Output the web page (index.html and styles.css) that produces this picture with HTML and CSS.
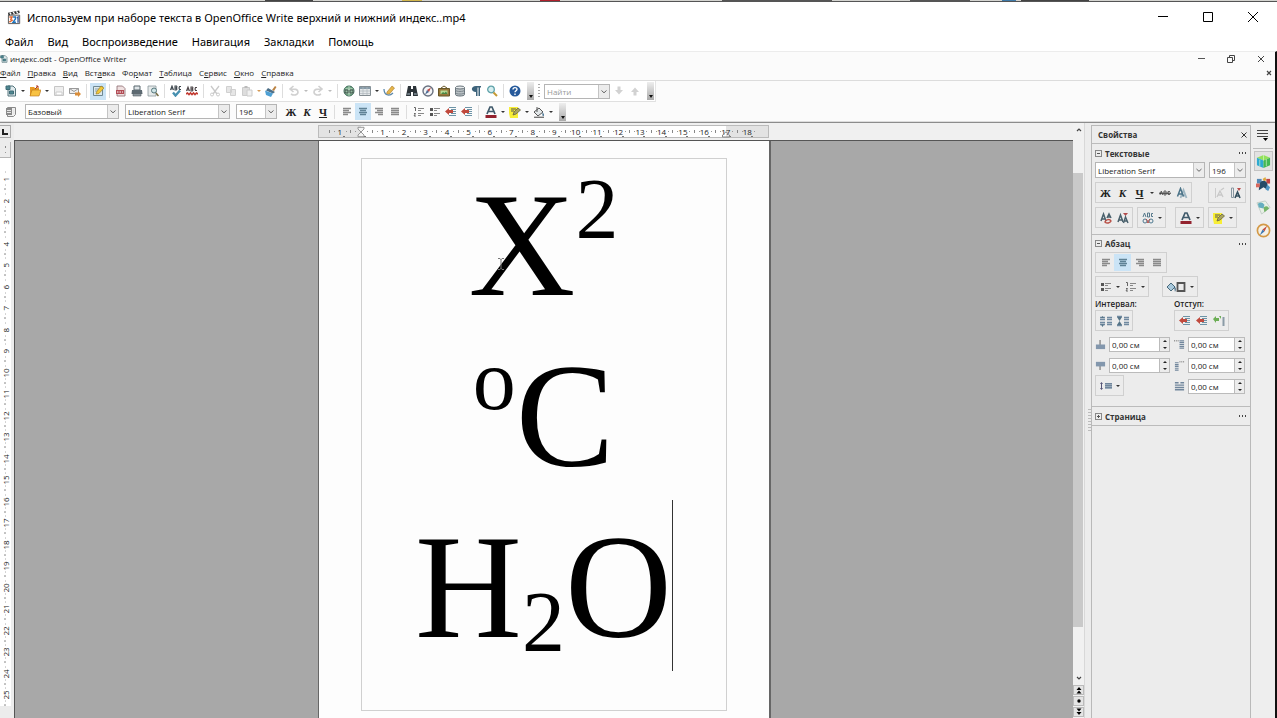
FILE: index.html
```html
<!DOCTYPE html>
<html lang="ru">
<head>
<meta charset="utf-8">
<title>Используем при наборе текста в OpenOffice Write верхний и нижний индекс..mp4</title>
<link rel="stylesheet" href="styles.css">
</head>
<body>
<svg class="defs" aria-hidden="true">
  <symbol id="chev" viewBox="0 0 8 8"><path d="M1.500 3 4 5.300 6.500 3" fill="none" stroke="#666" stroke-width="1"/></symbol>
  <symbol id="doc" viewBox="0 0 12 12"><path d="M3 1h5l2.500 2.500V11H3z" fill="#dfe9ec" stroke="#54757c"/><path d="M1 1h4v3.500H1zM4.500 6h4v3h-4z" fill="#4f8791" stroke="#3f6c76"/></symbol>
  <symbol id="open" viewBox="0 0 12 12"><path d="M1 2h4l1 1h4v8H1z" fill="#e79b25"/><path d="M1 11 3 5h9l-2 6z" fill="#f8c243" stroke="#b8731a" stroke-width=".6"/><path d="m6 4 3-3m0 0H7m2 0v2" stroke="#b13c21" fill="none"/></symbol>
  <symbol id="save" viewBox="0 0 12 12"><path d="M1.500 1.500h9v9h-9z" fill="#eee" stroke="#c6c6c6"/><path d="M3 7h6v3H3z" fill="#fff" stroke="#ccc"/></symbol>
  <symbol id="mail" viewBox="0 0 12 12"><path d="M.5 3.500h9v5h-9z" fill="#eee" stroke="#999"/><path d="m.5 3.500 4.500 3 4.500-3" fill="none" stroke="#999"/><path d="M6 7.500h3V6l3 3-3 3v-1.500H6z" fill="#d98d3a"/></symbol>
  <symbol id="edit" viewBox="0 0 12 12"><path d="M1.500 1.500h9v9h-9z" fill="#dce8ec" stroke="#6f8992"/><path d="M3 4h5M3 6h3" stroke="#8fa3aa"/><path d="m4 9 .5-2L9 1l3 2-5 5.500z" fill="#f1c83b" stroke="#99771a" stroke-width=".6"/></symbol>
  <symbol id="pdf" viewBox="0 0 12 12"><path d="M2 1h5.500L10 3.500V11H2z" fill="#efe0e0" stroke="#8c6a6f" stroke-width=".8"/><path d="M1 5h8v4H1z" fill="#b34c55"/><path d="M2 7h1.500M4.500 7H6M7 7h1" stroke="#fff"/></symbol>
  <symbol id="print" viewBox="0 0 12 12"><path d="M3 1h6v4H3z" fill="#dfe5e8" stroke="#59666d"/><path d="M1 5h10l.5 4H.5z" fill="#5d6a72"/><path d="M2 8.500h8V11H2z" fill="#8d989e" stroke="#525b61" stroke-width=".6"/></symbol>
  <symbol id="preview" viewBox="0 0 12 12"><path d="M1 1h8v10H1z" fill="#e6eaea" stroke="#8a989c" stroke-width=".8"/><circle cx="7" cy="5.500" r="2.500" fill="#cfe4e6" stroke="#56777c"/><path d="m9 8 2.500 3" stroke="#746b42" stroke-width="1.500"/></symbol>
  <symbol id="spell" viewBox="0 0 12 12"><path d="M.5 5 2 1l1.500 4M1 4h2M5 1h1.500L7 2l-1 1 1 1-.7 1H5zM11 1.500H9.500L9 3l.5 1.500H11" fill="none" stroke="#3c454c" stroke-width="1.100"/><path d="m3 7.500 2.500 3L10 5.500" fill="none" stroke="#4690b0" stroke-width="2.400"/></symbol>
  <symbol id="auto" viewBox="0 0 12 12"><path d="M.5 6 2 2l1.500 4M1 5h2M5 2h1.500L7 3 6 4l1 1-.7 1H5zM11 2.500H9.500L9 4l.5 1.500H11" fill="none" stroke="#4b4447" stroke-width="1.100"/><path d="m0 9 1.500-1L3 9.500 4.500 8 6 9.500 7.500 8 9 9.500 10.500 8 12 9" fill="none" stroke="#c33a31" stroke-width="1.600"/></symbol>
  <symbol id="cut" viewBox="0 0 12 12"><path d="m2 1 6 8M10 1 4 9" stroke="#c9c9c9" stroke-width="1.300"/><circle cx="3" cy="9.500" r="1.500" fill="none" stroke="#ccc"/><circle cx="9" cy="9.500" r="1.500" fill="none" stroke="#ccc"/></symbol>
  <symbol id="copy" viewBox="0 0 12 12"><path d="M1.500 1.500h5v6h-5zM5.500 4.500h5v6h-5z" fill="#e6e6e6" stroke="#d0d0d0"/></symbol>
  <symbol id="paste" viewBox="0 0 12 12"><path d="M1.500 2.500h7v8h-7z" fill="#ddd" stroke="#ccc"/><path d="M3.500 1h3v2h-3z" fill="#bbb"/><path d="M6 5h5v6H6z" fill="#f1f1f1" stroke="#ccc"/></symbol>
  <symbol id="brush" viewBox="0 0 12 12"><path d="m7 5 3-4 1.500 1L9 6z" fill="#bb8344"/><path d="m3 3 7 4-2 1.500L1 5.500z" fill="#4e6f87"/><path d="m0 5.500 8 3L6 12 1 10z" fill="#4ea0d4"/></symbol>
  <symbol id="undo" viewBox="0 0 12 12"><path d="M3 9c3 2 7 1 7-2S7 4 3 4m2.500-3L2 4l3.500 3" fill="none" stroke="#d0d0d0" stroke-width="1.600"/></symbol>
  <symbol id="redo" viewBox="0 0 12 12"><path d="M9 9c-3 2-7 1-7-2s3-3 7-3M6.500 1 10 4 6.500 7" fill="none" stroke="#d0d0d0" stroke-width="1.600"/></symbol>
  <symbol id="globe" viewBox="0 0 12 12"><circle cx="6" cy="6" r="5" fill="#72a884" stroke="#3d6a58"/><path d="M1 6h10M6 1v10M2.500 3.500q3.500 1.500 7 0M2.500 8.500q3.500-1.500 7 0" fill="none" stroke="#d0e6d4" stroke-width=".7"/><path d="M2 5h3v3H2zM7 5h3v3H7z" fill="none" stroke="#44534e"/></symbol>
  <symbol id="table" viewBox="0 0 12 12"><path d="M.5 1.500h11v9H.5z" fill="#e4e8ea" stroke="#848d92"/><path d="M.5 2h11v2H.5z" fill="#879ba8"/><path d="M4 2v8M8 2v8M1 6h10M1 8.500h10" stroke="#b0b8bd" stroke-width=".7"/></symbol>
  <symbol id="draw" viewBox="0 0 12 12"><path d="m4 7 5-6 2.500 2L6.500 9 3.500 9.500z" fill="#e6b64a" stroke="#a47629" stroke-width=".6"/><path d="M1 4c0 6 5 8 9 4" fill="none" stroke="#5d89ac" stroke-width="1.300"/></symbol>
  <symbol id="find" viewBox="0 0 12 12"><path d="M2 1h3v3h2V1h3l2 10H7V7H5v4H0z" fill="#2d3439"/><path d="M1.500 8H4v2H1zM8 8h2.500l.5 2H8z" fill="#6c7981"/></symbol>
  <symbol id="nav" viewBox="0 0 12 12"><circle cx="6" cy="6" r="5" fill="#f3f5f7" stroke="#6b7280" stroke-width="1.400"/><path d="m9 2.500-2 4.500-2-2z" fill="#c34742"/><path d="M3 9.500 5 5l2 2z" fill="#4a6a95"/></symbol>
  <symbol id="gallery" viewBox="0 0 12 12"><path d="m3 3 3-2 3 2" fill="none" stroke="#6b5a2c"/><path d="M.5 3.500h11v7.500H.5z" fill="#97783a" stroke="#665628"/><path d="M2.500 5.500h7V9h-7z" fill="#b9db95"/><path d="m3 9 2-2 1.500 1L8 6.500 9.500 9z" fill="#4b8745"/></symbol>
  <symbol id="db" viewBox="0 0 12 12"><path d="M1.500 2.500v7c0 2 9 2 9 0v-7" fill="#b9c0c4" stroke="#68737a"/><ellipse cx="6" cy="2.500" rx="4.500" ry="1.500" fill="#e6eaec" stroke="#68737a"/><path d="M1.500 5c0 2 9 2 9 0m-9 2.500c0 2 9 2 9 0" fill="none" stroke="#7f8a90"/></symbol>
  <symbol id="pilcrow" viewBox="0 0 12 12"><path d="M6 1h5v1.500h-1V11H8.500V2.500h-1V11H6V7C.5 7 .5 1 6 1z" fill="#3d637b"/></symbol>
  <symbol id="zoom" viewBox="0 0 12 12"><circle cx="5" cy="4.500" r="3.300" fill="#d6eef0" stroke="#5da1a8" stroke-width="1.300"/><path d="m7.500 7.500 3.500 3.500" stroke="#c69a35" stroke-width="2"/></symbol>
  <symbol id="help" viewBox="0 0 12 12"><circle cx="6" cy="6" r="5.500" fill="#265a9b"/><path d="M4 4.500C4 2 8 2 8 4.300c0 1.400-2 1.400-2 3M6 8.500V10" fill="none" stroke="#fff" stroke-width="1.400"/></symbol>
  <symbol id="down" viewBox="0 0 12 12"><path d="M4.500 1.500h3V5H10l-4 4.500L2 5h2.500z" fill="#d2d2d2"/></symbol>
  <symbol id="up" viewBox="0 0 12 12"><path d="M4.500 10.500h3V7H10L6 2.500 2 7h2.500z" fill="#d2d2d2"/></symbol>
  <symbol id="styles" viewBox="0 0 12 12"><path d="M2.500 1.500h8v7l-2 2h-6z" fill="#f0f0f0" stroke="#8a8a8a"/><path d="M1 2h6v7H1z" fill="#8a8a8a"/><path d="M2 4.500h4M2 6.500h4M8.500 3v5" stroke="#e6e6e6"/></symbol>
  <symbol id="left" viewBox="0 0 12 12"><path d="M2 2.500h8M2 4.500h6M2 6.500h8M2 8.500h5" stroke="#8a8a8a" stroke-width="1.300"/></symbol>
  <symbol id="center" viewBox="0 0 12 12"><path d="M2 2.500h8M3 4.500h6M2 6.500h8M3 8.500h6" stroke="#5f8296" stroke-width="1.300"/></symbol>
  <symbol id="right" viewBox="0 0 12 12"><path d="M2 2.500h8M4 4.500h6M2 6.500h8M5 8.500h5" stroke="#8a8a8a" stroke-width="1.300"/></symbol>
  <symbol id="just" viewBox="0 0 12 12"><path d="M2 2.500h8M2 4.500h8M2 6.500h8M2 8.500h8" stroke="#8a8a8a" stroke-width="1.300"/></symbol>
  <symbol id="num" viewBox="0 0 12 12"><path d="M1 1.500h1.500V5M1 7.500h1.500L1 10h2" fill="none" stroke="#666"/><path d="M5 2.500h6M5 4.500h3M5 7.500h6M5 9.500h3" stroke="#888"/></symbol>
  <symbol id="bul" viewBox="0 0 12 12"><path d="M1 2h3v3H1zM1 7h3v3H1z" fill="#555"/><path d="M5 2.500h6M5 4.500h3M5 7.500h6M5 9.500h3" stroke="#888"/></symbol>
  <symbol id="ind" viewBox="0 0 12 12"><path d="M4 1.500h7M6 3.500h5M7 5.500h4M6 7.500h5M4 9.500h7" stroke="#6d93a6" stroke-width="1.200"/><path d="M0 5.500 4 2v2h4v3H4v2z" fill="#c0493d"/></symbol>
  <symbol id="fcol" viewBox="0 0 12 12"><path d="M2 8 5 1h2l3 7M3.500 5.500h5" fill="none" stroke="#405a6b" stroke-width="1.700"/><path d="M.5 9h11v3H.5z" fill="#93222e"/></symbol>
  <symbol id="mark" viewBox="0 0 12 12"><path d="M0 1h9v11H1L0 7z" fill="#f8ee36"/><path d="M2 3h5M2 5h3" stroke="#555"/><path d="m4 9 1-3 4-4 2.500 2L7 8z" fill="#aaa45f" stroke="#67653d" stroke-width=".8"/></symbol>
  <symbol id="fill" viewBox="0 0 12 12"><path d="m1 6 5-4 4 4-5 4z" fill="#e3e8ea" stroke="#555"/><path d="M4 1v5" stroke="#555"/><path d="M9.500 6q2.500 3 1 4t-1-4z" fill="#4c7694"/><path d="M1 11.300h10" stroke="#777" stroke-width="1.400"/></symbol>
  <symbol id="strike" viewBox="0 0 12 12"><path d="M1 8 2.300 4 3.600 8M5 4h2v4H5zM11 4.500H9v3h2" fill="none" stroke="#555" stroke-width=".9"/><path d="M0 6.200h12" stroke="#333"/></symbol>
  <symbol id="shadow" viewBox="0 0 12 12"><path d="M4.500 11 7.500 3l3 8M6 8.500h4" fill="none" stroke="#9fb6c2" stroke-width="1.800"/><path d="m1.500 9.500 3-8 3 8M3 7h4" fill="none" stroke="#4b7388" stroke-width="1.500"/></symbol>
  <symbol id="spacing" viewBox="0 0 12 12"><path d="M1.500 1h2v9.500h-2z" fill="none" stroke="#8796a0"/><path d="m5 11 2.500-6L10 11M6 9h4" fill="none" stroke="#34505f" stroke-width="1.600"/><path d="M7 1h4L9 4z" fill="#b94a48"/></symbol>
  <symbol id="spacoff" viewBox="0 0 12 12"><path d="M2.500 1v10" stroke="#ccc"/><path d="m4 10 3-6 3 6M5 8h4M8 3l3-2" fill="none" stroke="#c8c8c8" stroke-width="1.300"/></symbol>
  <symbol id="sup" viewBox="0 0 12 12"><path d="m1 10 2.500-7L6 10M2 8h4" fill="none" stroke="#49606c" stroke-width="1.500"/><path d="M6 1h5L8.500 4z" fill="#b34b4b"/><path d="m6.500 11 2-6 2.500 6M7.500 9h3" fill="none" stroke="#49606c" stroke-width="1.400"/></symbol>
  <symbol id="sub" viewBox="0 0 12 12"><path d="m1 9 2.500-7L6 9M2 7h3M7 6l2-4 2 4M8 5h3" fill="none" stroke="#49606c" stroke-width="1.500"/><path d="M5 10c1-3 5-3 6-1-1 2-4 3-6 1z" fill="none" stroke="#b95148" stroke-width="1.500"/></symbol>
  <symbol id="chars" viewBox="0 0 12 12"><path d="m1 5 1.500-4L4 5M5.500 1v4h2V1zM11 1.500H9.500v3H11" fill="none" stroke="#56798b"/><circle cx="3" cy="9" r="2" fill="none" stroke="#4e7a91"/><circle cx="9" cy="9" r="2" fill="none" stroke="#4e7a91"/><path d="m4 7 3 4M8 7l-3 4" stroke="#b1504b"/></symbol>
  <symbol id="bucket" viewBox="0 0 20 12"><path d="m1 6 4-4 4 4-4 4z" fill="#a9c9dc" stroke="#496a7c"/><path d="M8 5q3 2 1 6z" fill="#35607c"/><path d="M11.500 2h7v8h-7z" fill="none" stroke="#555" stroke-width="1.800"/></symbol>
  <symbol id="spin1" viewBox="0 0 12 12"><path d="M0 2.500h5M0 4.500h5M0 7.500h5M0 9.500h5M7 2.500h5M7 4.500h5M7 7.500h5M7 9.500h5" stroke="#7089a0" stroke-width="1.400"/><path d="m1 3 1.500-2L4 3zM1 9.500 2.500 12 4 9.500z" fill="#557487"/></symbol>
  <symbol id="spin2" viewBox="0 0 12 12"><path d="M0 1.500h5M0 10.500h5M7 2.500h5M7 4.500h5M7 7.500h5M7 9.500h5" stroke="#7089a0" stroke-width="1.400"/><path d="m0 2 2.500 4L5 2zM0 10l2.500-4L5 10z" fill="#557487"/></symbol>
  <symbol id="hang" viewBox="0 0 12 12"><path d="m0 4 3-3v2h3v3H3v2zM6 1h2v3" fill="#6cae55"/><path d="M10.500 2v9" stroke="#8a9ba6" stroke-width="2"/></symbol>
  <symbol id="above" viewBox="0 0 12 12"><path d="M5.500 1v6" stroke="#777" stroke-width="1.300"/><path d="M1 6h10v5H1z" fill="#8397ad"/></symbol>
  <symbol id="below" viewBox="0 0 12 12"><path d="M5.500 6v5" stroke="#777" stroke-width="1.300"/><path d="M1 2h10v5H1z" fill="#8397ad"/></symbol>
  <symbol id="before" viewBox="0 0 12 12"><path d="M0 2h5" stroke="#555" stroke-dasharray="1 1"/><path d="M6 2h5M6 4h5M6 6h5M6 8h5M6 10h5" stroke="#71869c" stroke-width="1.300"/></symbol>
  <symbol id="after" viewBox="0 0 12 12"><path d="M6 2h5" stroke="#555" stroke-dasharray="1 1"/><path d="M1 3h4M1 5h4M1 7h4M1 9h4M1 11h4" stroke="#71869c" stroke-width="1.300"/></symbol>
  <symbol id="first" viewBox="0 0 12 12"><path d="M1 2h4M7 2h4M1 4.500h10M1 7h10M1 9.500h10" stroke="#71869c" stroke-width="1.600"/></symbol>
  <symbol id="lines" viewBox="0 0 12 12"><path d="m0 4 1.500-2L3 4zM0 8l1.500 2L3 8zM1 4h1v4H1z" fill="#557"/><path d="M5 3h7v6H5z" fill="#9aabba"/><path d="M5 3.500h7M5 5.500h7M5 7.500h7" stroke="#71869c"/></symbol>
  <symbol id="cube" viewBox="0 0 16 16"><path d="m1 4 7-3 7 3-7 3z" fill="#93e25a"/><path d="m1 4 7 3v8l-7-3z" fill="#2eaad1"/><path d="m15 4-7 3v8l7-3z" fill="#42b854"/><path d="M4 6v7M11 5.500V13M8 1v6" stroke="#d6f5d1" stroke-width=".7"/></symbol>
  <symbol id="people" viewBox="0 0 16 16"><path d="M1 2h5v5H1z" fill="#5489b5"/><path d="m7 2 3-2 1 3-2 2z" fill="#ddaa42"/><path d="M11 2h4v5h-4z" fill="#c14444"/><path d="M3 14q0-10 5-10t5 10l-5-3z" fill="#264b67"/><path d="M0 7h4v4H0z" fill="#d9665b"/><path d="m12 8 3 3-2 4-3-2z" fill="#4f95c3"/></symbol>
  <symbol id="pics" viewBox="0 0 16 16"><path d="m1 3 9-2 5 7-9 7z" fill="#e8f0e6" stroke="#c1cdc5"/><path d="M2 4q4-3 7 1l-1 4-5-1z" fill="#65aebf"/><path d="M8 8q4-3 6 1l-5 4z" fill="#74b467"/></symbol>
  <symbol id="compass" viewBox="0 0 16 16"><circle cx="8" cy="8" r="6.500" fill="#f5f1e6" stroke="#d49a47" stroke-width="1.800"/><path d="M12 3 9 9 7 7z" fill="#c34c3f"/><path d="m4 13 3-6 2 2z" fill="#3c78b4"/></symbol>
</svg>

<div class="backdrop"></div>
<header class="titlebar">
  <svg class="clap" viewBox="0 0 16 16"><path d="M1.500 5.500h12v9h-12z" fill="#fff" stroke="#555"/><path d="m1 3 12-2.500.6 2.800-12 2.500z" fill="#333"/><path d="m3 2.800 1.500 2m2-2.700 1.500 2m2-2.700 1.500 2" stroke="#fff" stroke-width="1.400"/><path d="M2.500 7.500h3L4 10l1.500 1-3 2" fill="none" stroke="#e0662f" stroke-width="1.500"/><path d="M6.500 7.500H9v2l-2.500 3.500H9.500" fill="none" stroke="#1d74bd" stroke-width="1.500"/><path d="m10.500 8.500 1.300-1v6" fill="none" stroke="#3a5a9a" stroke-width="1.500"/></svg>
  <h1>Используем при наборе текста в OpenOffice Write верхний и нижний индекс..mp4</h1>
  <div class="wincontrols">
    <button aria-label="Свернуть"><svg viewBox="0 0 12 12"><path d="M1 5.500h10" stroke="#000"/></svg></button>
    <button aria-label="Развернуть"><svg viewBox="0 0 12 12"><path d="M1.500 1.500h9v9h-9z" fill="none" stroke="#000"/></svg></button>
    <button aria-label="Закрыть"><svg viewBox="0 0 12 12"><path d="m1 1 10 10M11 1 1 11" stroke="#000"/></svg></button>
  </div>
</header>
<nav class="playermenu">
  <button>Файл</button><button>Вид</button><button>Воспроизведение</button><button>Навигация</button><button>Закладки</button><button>Помощь</button>
</nav>

<main class="writer">
  <div class="wtitle">
    <svg class="ic"><use href="#doc"/></svg><span>индекс.odt - OpenOffice Writer</span>
    <div class="wcontrols">
      <button aria-label="Свернуть"><svg viewBox="0 0 10 10"><path d="M2 4.500h7" stroke="#555"/></svg></button>
      <button aria-label="Восстановить"><svg viewBox="0 0 10 10"><path d="M1.500 3.500h5v5h-5zM3.500 3V1.500h5v5H7" fill="none" stroke="#444"/></svg></button>
      <button aria-label="Закрыть"><svg viewBox="0 0 10 10"><path d="m2 2 6 6M8 2 2 8" stroke="#444"/></svg></button>
    </div>
  </div>
  <nav class="wmenu">
    <button><u>Ф</u>айл</button><button><u>П</u>равка</button><button><u>В</u>ид</button><button>Вст<u>а</u>вка</button><button>Фо<u>р</u>мат</button><button><u>Т</u>аблица</button><button>С<u>е</u>рвис</button><button><u>О</u>кно</button><button><u>С</u>правка</button>
    <button class="closedoc" aria-label="Закрыть документ"><svg viewBox="0 0 8 8"><path d="m2 2 4 4M6 2 2 6" stroke="#444" stroke-width="1.200"/></svg></button>
  </nav>
  <div class="toolbar first">
    <button class="tb" aria-label="Создать"><svg class="ic"><use href="#doc"/></svg></button><button class="dd" aria-label="Ещё"></button>
    <button class="tb" aria-label="Открыть"><svg class="ic"><use href="#open"/></svg></button><button class="dd" aria-label="Ещё"></button>
    <button class="tb" aria-label="Сохранить"><svg class="ic"><use href="#save"/></svg></button>
    <button class="tb" aria-label="Отправить"><svg class="ic"><use href="#mail"/></svg></button>
    <i class="sep"></i>
    <button class="tb on" aria-label="Правка"><svg class="ic"><use href="#edit"/></svg></button>
    <i class="sep"></i>
    <button class="tb" aria-label="PDF"><svg class="ic"><use href="#pdf"/></svg></button>
    <button class="tb" aria-label="Печать"><svg class="ic"><use href="#print"/></svg></button>
    <button class="tb" aria-label="Просмотр"><svg class="ic"><use href="#preview"/></svg></button>
    <i class="sep"></i>
    <button class="tb" aria-label="Орфография"><svg class="ic"><use href="#spell"/></svg></button>
    <button class="tb" aria-label="Автопроверка"><svg class="ic"><use href="#auto"/></svg></button>
    <i class="sep"></i>
    <button class="tb" aria-label="Вырезать"><svg class="ic"><use href="#cut"/></svg></button>
    <button class="tb" aria-label="Копировать"><svg class="ic"><use href="#copy"/></svg></button>
    <button class="tb" aria-label="Вставить"><svg class="ic"><use href="#paste"/></svg></button><button class="dd warm" aria-label="Ещё"></button>
    <button class="tb" aria-label="Формат по образцу"><svg class="ic"><use href="#brush"/></svg></button>
    <i class="sep"></i>
    <button class="tb" aria-label="Отменить"><svg class="ic"><use href="#undo"/></svg></button><button class="dd dim" aria-label="Ещё"></button>
    <button class="tb" aria-label="Вернуть"><svg class="ic"><use href="#redo"/></svg></button><button class="dd dim" aria-label="Ещё"></button>
    <i class="sep"></i>
    <button class="tb" aria-label="Гиперссылка"><svg class="ic"><use href="#globe"/></svg></button>
    <button class="tb" aria-label="Таблица"><svg class="ic"><use href="#table"/></svg></button><button class="dd" aria-label="Ещё"></button>
    <button class="tb" aria-label="Рисование"><svg class="ic"><use href="#draw"/></svg></button>
    <i class="sep"></i>
    <button class="tb" aria-label="Найти и заменить"><svg class="ic"><use href="#find"/></svg></button>
    <button class="tb" aria-label="Навигатор"><svg class="ic"><use href="#nav"/></svg></button>
    <button class="tb" aria-label="Галерея"><svg class="ic"><use href="#gallery"/></svg></button>
    <button class="tb" aria-label="Источники данных"><svg class="ic"><use href="#db"/></svg></button>
    <button class="tb" aria-label="Непечатаемые символы"><svg class="ic"><use href="#pilcrow"/></svg></button>
    <button class="tb" aria-label="Масштаб"><svg class="ic"><use href="#zoom"/></svg></button>
    <i class="sep"></i>
    <button class="tb" aria-label="Справка"><svg class="ic"><use href="#help"/></svg></button>
    <button class="more" aria-label="Параметры панели"></button>
    <i class="grip"></i>
    <label class="combo search"><input type="text" placeholder="Найти" aria-label="Найти"><svg><use href="#chev"/></svg></label>
    <button class="tb" aria-label="Найти далее"><svg class="ic"><use href="#down"/></svg></button>
    <button class="tb" aria-label="Найти ранее"><svg class="ic"><use href="#up"/></svg></button>
    <button class="more" aria-label="Параметры панели"></button>
  </div>
  <div class="toolbar second">
    <button class="tb" aria-label="Стили"><svg class="ic"><use href="#styles"/></svg></button>
    <label class="combo style"><select aria-label="Стиль"><option>Базовый</option></select><svg><use href="#chev"/></svg></label>
    <label class="combo font"><select aria-label="Шрифт"><option>Liberation Serif</option></select><svg><use href="#chev"/></svg></label>
    <label class="combo size"><select aria-label="Кегль"><option>196</option></select><svg><use href="#chev"/></svg></label>
    <button class="tb let">Ж</button><button class="tb let it">К</button><button class="tb let un">Ч</button>
    <i class="sep"></i>
    <button class="tb" aria-label="Влево"><svg class="ic"><use href="#left"/></svg></button>
    <button class="tb on" aria-label="По центру"><svg class="ic"><use href="#center"/></svg></button>
    <button class="tb" aria-label="Вправо"><svg class="ic"><use href="#right"/></svg></button>
    <button class="tb" aria-label="По ширине"><svg class="ic"><use href="#just"/></svg></button>
    <i class="sep"></i>
    <button class="tb" aria-label="Нумерация"><svg class="ic"><use href="#num"/></svg></button>
    <button class="tb" aria-label="Маркеры"><svg class="ic"><use href="#bul"/></svg></button>
    <button class="tb" aria-label="Уменьшить отступ"><svg class="ic"><use href="#ind"/></svg></button>
    <button class="tb" aria-label="Увеличить отступ"><svg class="ic"><use href="#ind"/></svg></button>
    <i class="sep"></i>
    <button class="tb" aria-label="Цвет шрифта"><svg class="ic"><use href="#fcol"/></svg></button><button class="dd" aria-label="Ещё"></button>
    <button class="tb" aria-label="Фон символов"><svg class="ic"><use href="#mark"/></svg></button><button class="dd" aria-label="Ещё"></button>
    <button class="tb" aria-label="Цвет фона"><svg class="ic"><use href="#fill"/></svg></button><button class="dd" aria-label="Ещё"></button>
    <button class="more" aria-label="Параметры панели"></button>
  </div>

  <div class="work">
    <div class="vcol">
      <button class="corner" aria-label="Тип табуляции"><svg viewBox="0 0 10 10"><path d="M3 2v5h5" fill="none" stroke="#222" stroke-width="2"/></svg></button>
      <div class="vgray"></div>
      <div class="vruler"><span>1</span><span>2</span><span>3</span><span>4</span><span>5</span><span>6</span><span>7</span><span>8</span><span>9</span><span>10</span><span>11</span><span>12</span><span>13</span><span>14</span><span>15</span><span>16</span><span>17</span><span>18</span><span>19</span><span>20</span><span>21</span><span>22</span><span>23</span><span>24</span><span>25</span></div>
    </div>
    <div class="docarea">
      <div class="hband">
        <div class="hruler"><span>1</span><span class="zero"><svg viewBox="0 0 10 14"><path d="M1.500 1.500h7v2L5 7l3.500 3.500v2h-7v-2L5 7 1.500 3.500z" fill="#f4f4f4" stroke="#888"/></svg></span><span>1</span><span>2</span><span>3</span><span>4</span><span>5</span><span>6</span><span>7</span><span>8</span><span>9</span><span>10</span><span>11</span><span>12</span><span>13</span><span>14</span><span>15</span><span>16</span><span class="end">17<svg viewBox="0 0 10 7"><path d="M1.500 6V4L5 .8 8.500 4v2z" fill="none" stroke="#888"/></svg></span><span>18</span></div>
      </div>
      <div class="canvas">
        <article class="page">
          <div class="body">
            <p>X<sup>2</sup></p>
            <p><sup>o</sup>C</p>
            <p>H<sub>2</sub>O<i class="caret"></i></p>
            <svg class="ibeam" viewBox="0 0 8 14"><path d="M1 1.500h2l1 1 1-1h2M4 2v10M1 12.500h2l1-1 1 1h2" fill="none" stroke="#777"/></svg>
          </div>
        </article>
      </div>
    </div>
    <div class="scroll">
      <button aria-label="Вверх"><svg viewBox="0 0 8 8"><path d="m2 5 2-2 2 2" fill="none" stroke="#444" stroke-width="1.200"/></svg></button>
      <div class="track"><div class="thumb"></div></div>
      <button aria-label="Вниз"><svg viewBox="0 0 8 8"><path d="m2 3 2 2 2-2" fill="none" stroke="#444" stroke-width="1.200"/></svg></button>
      <button class="box" aria-label="Предыдущая"><svg viewBox="0 0 8 8"><path d="m1.500 4 2.500-3 2.500 3zM1.500 7.500l2.500-3 2.500 3z"/></svg></button>
      <button class="box" aria-label="Навигация"><svg viewBox="0 0 8 8"><circle cx="4" cy="4" r="1.700"/></svg></button>
      <button class="box" aria-label="Следующая"><svg viewBox="0 0 8 8"><path d="m1.500 .5 2.500 3 2.500-3zM1.500 4l2.500 3 2.500-3z"/></svg></button>
    </div>
    <div class="splitter"><i></i></div>
    <aside class="side">
      <div class="head"><h2>Свойства</h2><button class="x" aria-label="Закрыть"><svg viewBox="0 0 8 8"><path d="m1.500 1.500 5 5M6.500 1.500l-5 5" stroke="#333"/></svg></button></div>
      <section>
        <div class="sect"><button class="fold" aria-label="Свернуть"></button><h3>Текстовые</h3><button class="dots" aria-label="Ещё"></button></div>
        <div class="row">
          <label class="combo grow"><select aria-label="Имя шрифта"><option>Liberation Serif</option></select><svg><use href="#chev"/></svg></label>
          <label class="combo small"><select aria-label="Размер"><option>196</option></select><svg><use href="#chev"/></svg></label>
        </div>
        <div class="row spread">
          <div class="group wide"><button class="tb let">Ж</button><button class="tb let it">К</button><button class="tb let un">Ч</button><button class="dd" aria-label="Ещё"></button><button class="tb" aria-label="Зачёркивание"><svg class="ic"><use href="#strike"/></svg></button><button class="tb" aria-label="Тень"><svg class="ic"><use href="#shadow"/></svg></button></div>
          <div class="group"><button class="tb" aria-label="Уменьшить"><svg class="ic"><use href="#spacoff"/></svg></button><button class="tb" aria-label="Увеличить"><svg class="ic"><use href="#spacing"/></svg></button></div>
        </div>
        <div class="row">
          <div class="group"><button class="tb" aria-label="Нижний индекс"><svg class="ic"><use href="#sub"/></svg></button><button class="tb" aria-label="Верхний индекс"><svg class="ic"><use href="#sup"/></svg></button></div>
          <div class="group"><button class="tb" aria-label="Интервал"><svg class="ic"><use href="#chars"/></svg></button><button class="dd" aria-label="Ещё"></button></div>
          <div class="group push"><button class="tb" aria-label="Цвет"><svg class="ic"><use href="#fcol"/></svg></button><button class="dd" aria-label="Ещё"></button></div>
          <div class="group tail"><button class="tb" aria-label="Выделение"><svg class="ic"><use href="#mark"/></svg></button><button class="dd" aria-label="Ещё"></button></div>
        </div>
      </section>
      <section class="para">
        <div class="sect"><button class="fold" aria-label="Свернуть"></button><h3>Абзац</h3><button class="dots" aria-label="Ещё"></button></div>
        <div class="row tight">
          <div class="group"><button class="tb" aria-label="Влево"><svg class="ic"><use href="#left"/></svg></button><button class="tb on" aria-label="По центру"><svg class="ic"><use href="#center"/></svg></button><button class="tb" aria-label="Вправо"><svg class="ic"><use href="#right"/></svg></button><button class="tb" aria-label="По ширине"><svg class="ic"><use href="#just"/></svg></button></div>
        </div>
        <div class="row apart">
          <div class="group"><button class="tb" aria-label="Маркеры"><svg class="ic"><use href="#bul"/></svg></button><button class="dd" aria-label="Ещё"></button><button class="tb" aria-label="Нумерация"><svg class="ic"><use href="#num"/></svg></button><button class="dd" aria-label="Ещё"></button></div>
          <div class="group"><button class="tb big" aria-label="Фон абзаца"><svg class="ic"><use href="#bucket"/></svg></button><button class="dd" aria-label="Ещё"></button></div>
        </div>
        <div class="cols">
          <div class="col">
            <h4>Интервал:</h4>
            <div class="group"><button class="tb" aria-label="Увеличить"><svg class="ic"><use href="#spin1"/></svg></button><button class="tb" aria-label="Уменьшить"><svg class="ic"><use href="#spin2"/></svg></button></div>
            <label class="num"><svg class="ic"><use href="#above"/></svg><input type="text" value="0,00 см" aria-label="Над абзацем"><span class="spin"></span></label>
            <label class="num"><svg class="ic"><use href="#below"/></svg><input type="text" value="0,00 см" aria-label="Под абзацем"><span class="spin"></span></label>
            <div class="group"><button class="tb" aria-label="Межстрочный"><svg class="ic"><use href="#lines"/></svg></button><button class="dd" aria-label="Ещё"></button></div>
          </div>
          <div class="col">
            <h4>Отступ:</h4>
            <div class="group"><button class="tb" aria-label="Увеличить"><svg class="ic"><use href="#ind"/></svg></button><button class="tb" aria-label="Уменьшить"><svg class="ic"><use href="#ind"/></svg></button><button class="tb" aria-label="Висячий"><svg class="ic"><use href="#hang"/></svg></button></div>
            <label class="num"><svg class="ic"><use href="#before"/></svg><input type="text" value="0,00 см" aria-label="Перед текстом"><span class="spin"></span></label>
            <label class="num"><svg class="ic"><use href="#after"/></svg><input type="text" value="0,00 см" aria-label="После текста"><span class="spin"></span></label>
            <label class="num"><svg class="ic"><use href="#first"/></svg><input type="text" value="0,00 см" aria-label="Первая строка"><span class="spin"></span></label>
          </div>
        </div>
      </section>
      <section>
        <div class="sect"><button class="fold plus" aria-label="Развернуть"></button><h3>Страница</h3><button class="dots" aria-label="Ещё"></button></div>
      </section>
    </aside>
    <nav class="tabs">
      <button class="burger" aria-label="Меню"><svg viewBox="0 0 14 14"><path d="M1 2.500h11M1 5.500h11M1 8.500h11" stroke="#444"/><path d="M7 10h5l-2.500 3z"/></svg></button>
      <button class="tab active" aria-label="Свойства"><svg><use href="#cube"/></svg></button>
      <button class="tab" aria-label="Стили"><svg><use href="#people"/></svg></button>
      <button class="tab" aria-label="Галерея"><svg><use href="#pics"/></svg></button>
      <button class="tab" aria-label="Навигатор"><svg><use href="#compass"/></svg></button>
    </nav>
  </div>
</main>
</body>
</html>
```
FILE: styles.css
```css
* { box-sizing: border-box; }
body {
  margin: 0;
  height: 100vh;
  overflow: hidden;
  display: flex;
  flex-direction: column;
  background: #fff;
  color: #000;
  font-family: "Noto Sans", "Open Sans", sans-serif;
  font-size: 11px;
}
button, input, select { font: inherit; color: inherit; margin: 0; padding: 0; border: 0; background: none; }
h1, h2, h3, h4, p { margin: 0; font: inherit; }
svg { display: block; }
.defs { position: absolute; width: 0; height: 0; }

.backdrop {
  flex: none;
  height: 2px;
  border-bottom: 1px solid #555;
  background:
    linear-gradient(#444, #444) 265px 0 / 48px 1px no-repeat,
    linear-gradient(#d2b64c, #d2b64c) 402px 0 / 20px 1px no-repeat,
    linear-gradient(#b0202c, #b0202c) 540px 0 / 20px 1px no-repeat,
    linear-gradient(#555, #555) 722px 0 / 110px 1px no-repeat,
    linear-gradient(#555, #555) 910px 0 / 60px 1px no-repeat,
    linear-gradient(#3f7aa8, #3f7aa8) 1002px 0 / 14px 1px no-repeat,
    linear-gradient(#444, #444) 1021px 0 / 68px 1px no-repeat,
    #d4d4d0;
}

.titlebar { flex: none; display: flex; align-items: center; height: 30px; padding-left: 7px; }
.clap { width: 15px; height: 15px; margin-right: 5px; }
.wincontrols { display: flex; margin-left: auto; padding-right: 2px; }
.wincontrols button { width: 45px; height: 28px; display: grid; place-items: center; }
.wincontrols svg { width: 12px; height: 12px; }
.playermenu { flex: none; display: flex; gap: 14px; height: 19px; padding-left: 5px; align-items: center; }

.writer {
  flex: 1;
  min-height: 0;
  display: flex;
  flex-direction: column;
  border-top: 1px solid #ececec;
  border-right: 2px solid #111;
  background: #fbfbfb;
  font-family: "Open Sans", "Noto Sans", sans-serif;
  font-size: 8px;
  color: #222;
}
.ic { width: 12px; height: 12px; flex: none; }
.wtitle { flex: none; height: 13px; display: flex; align-items: center; }
.wtitle .ic { width: 8px; height: 10px; margin-right: 2px; }
.wcontrols { display: flex; gap: 20px; margin-left: auto; padding-right: 9px; }
.wcontrols svg { width: 10px; height: 10px; }
.wmenu { flex: none; height: 16px; display: flex; gap: 7px; align-items: center; border-bottom: 1px solid #dcdcdc; }
.wmenu u { text-underline-offset: 1px; }
.closedoc { margin-left: auto; padding-right: 2px; }
.closedoc svg { width: 8px; height: 8px; }

.toolbar { flex: none; display: flex; align-items: center; padding-left: 3px; height: 21px; }
.toolbar.first { width: 656px; background: #fff; border-bottom: 1px solid #e0e0e0; border-right: 1px solid #e4e4e4; }
.toolbar.second { height: 20px; border-bottom: 1px solid #ddd; }
.tb { width: 16px; height: 17px; flex: none; display: grid; place-items: center; }
.tb.on { background: #cbe4f6; }
.tb.let { font: bold 11px "Liberation Serif", serif; }
.tb.it { font-style: italic; }
.tb.un { text-decoration: underline; }
.dd { width: 8px; height: 17px; flex: none; display: grid; place-items: center; color: #333; }
.dd::before { content: ""; border: 2px solid transparent; border-top-color: currentColor; border-bottom: 0; }
.dd.dim { color: #bbb; }
.dd.warm { color: #d59a55; }
.sep { flex: none; width: 7px; height: 14px; background: linear-gradient(#ddd, #ddd) 3px 0 / 1px 100% no-repeat; }
.second .sep { width: 8px; }
.more { flex: none; width: 7px; height: 18px; margin-left: 4px; display: grid; align-items: end; justify-content: center; padding-bottom: 2px; background: linear-gradient(#eee, #aaa); }
.more::before { content: ""; border: 2px solid transparent; border-top: 3px solid #111; border-bottom: 0; }
.grip { width: 2px; height: 14px; margin: 0 4px; background: repeating-linear-gradient(#aaa 0 1px, transparent 1px 3px); }
.combo { flex: none; display: flex; height: 15px; background: #fff; border: 1px solid #b5b5b5; }
.combo input, .combo select { flex: 1; min-width: 0; padding-left: 2px; appearance: none; outline: 0; border-radius: 0; }
.combo svg { flex: none; width: 11px; height: 13px; padding: 2px 1px; background: #ececec; border-left: 1px solid #c4c4c4; }
.search { width: 66px; margin-right: 1px; }
.search input::placeholder { color: #999; opacity: 1; }
.style { width: 94px; margin: 0 6px; }
.font { width: 105px; margin-right: 6px; }
.size { width: 41px; margin-right: 6px; }

.work {
  flex: 1;
  min-height: 0;
  display: grid;
  grid-template-columns: 14px minmax(0, 1fr) 11px 7px 160px 24px;
  border-top: 1px solid #8c8c8c;
  background: #ececec;
}
.vcol { overflow: hidden; }
.corner { display: block; width: 11px; height: 13px; margin-top: 2px; border: solid #aaa; border-width: 1px 1px 1px 0; }
.corner svg { width: 10px; height: 10px; }
.vgray { width: 11px; height: 16px; margin-top: 4px; border: solid #b5b5b5; border-width: 0 1px 1px 0; background: linear-gradient(#888, #888) 5px 4px / 1px 2px no-repeat, linear-gradient(#999, #999) 5px 10px / 1px 1px no-repeat; }
.vruler { width: 11px; height: 548px; padding-top: 10px; display: grid; grid-template-rows: repeat(25, 1fr); background: #fff; }
.vruler span {
  writing-mode: vertical-rl;
  transform: rotate(180deg);
  line-height: 11px;
  text-align: center;
  background:
    linear-gradient(#888, #888) 5px 0 / 2px 1px no-repeat,
    linear-gradient(#aaa, #aaa) 5px 4px / 1px 1px no-repeat,
    linear-gradient(#aaa, #aaa) 5px 17px / 1px 1px no-repeat;
}
.docarea { display: flex; flex-direction: column; overflow: hidden; }
.hband { flex: none; height: 17px; padding-top: 2px; display: flex; justify-content: center; background: #f0f0f0; }
.hruler {
  width: 451px;
  height: 13px;
  padding: 0 10px;
  display: grid;
  grid-template-columns: repeat(20, 1fr);
  border: 1px solid #bbb;
  background: linear-gradient(90deg, #e3e3e3 42px, #fff 42px 407px, #e3e3e3 407px);
}
.hruler span {
  line-height: 11px;
  text-align: center;
  background:
    linear-gradient(#888, #888) 0 4px / 1px 3px no-repeat,
    linear-gradient(#999, #999) 5px 5px / 1px 1px no-repeat,
    linear-gradient(#999, #999) 17px 5px / 1px 1px no-repeat,
    linear-gradient(#777, #777) 14px 10px / 2px 1px no-repeat;
}
.hruler .zero { display: grid; justify-content: center; }
.zero svg { width: 10px; height: 12px; }
.hruler .end { position: relative; }
.end svg { position: absolute; left: 6px; bottom: 0; width: 10px; height: 7px; }
.canvas { flex: 1; min-height: 0; overflow: hidden; background: #a8a8a8; border: solid #555; border-width: 1px 0 0 1px; }
.page { width: 453px; height: 637px; margin: 0 auto; padding: 17px 42px 0; background: #fdfdfd; border: solid #666; border-width: 0 2px 0 1px; }
.body { position: relative; height: 553px; padding-top: 1px; border: 1px solid #d0d0d0; text-align: center; font: 148px/171px "Liberation Serif", serif; color: #000; }
.body p { position: relative; height: 171px; }
.body sup, .body sub { font-size: 86px; line-height: 0; }
.body sup { vertical-align: 57px; }
.body sub { vertical-align: -14px; }
.caret { position: absolute; top: -2px; width: 1px; height: 171px; background: #333; }
.ibeam { position: absolute; left: 135px; top: 98px; width: 8px; height: 14px; }

.scroll { display: flex; flex-direction: column; background: #f1f1f1; padding-bottom: 1px; }
.scroll button { flex: none; height: 13px; display: grid; place-items: center; }
.scroll svg { width: 8px; height: 8px; }
.scroll .box { height: 10px; margin-top: 1px; border: 1px solid #bbb; background: #e5e5e5; }
.track { flex: 1; padding: 37px 1px 44px 0; display: flex; }
.thumb { flex: 1; background: #c9c9c9; }
.splitter { display: grid; align-items: center; justify-content: end; border-left: 1px solid #d8d8d8; }
.splitter i { width: 3px; height: 24px; background: repeating-linear-gradient(#bbb 0 1px, transparent 1px 3px); }

.side { min-width: 0; margin-top: 2px; border: solid #b9b9b9; border-width: 1px 1px 0 1px; }
.head { height: 17px; padding: 0 2px 0 6px; display: flex; align-items: center; justify-content: space-between; }
.side h2, .side h3 { font-weight: bold; color: #333; }
.side h4 { font-weight: 600; line-height: 11px; }
.x svg { width: 8px; height: 8px; }
.side section { border-top: 1px solid #bbb; padding: 0 4px 2px 3px; }
.side section.para { padding-bottom: 10px; }
.side section:last-child { padding-bottom: 0; border-bottom: 1px solid #bbb; }
.sect { height: 18px; display: flex; align-items: center; }
.para .sect { height: 17px; }
.fold { width: 7px; height: 7px; border: 1px solid #888; margin-right: 3px; background: linear-gradient(#555, #555) center / 3px 1px no-repeat; }
.fold.plus { background: linear-gradient(#555, #555) center / 3px 1px no-repeat, linear-gradient(#555, #555) center / 1px 3px no-repeat; }
.dots { width: 7px; height: 2px; margin-left: auto; background: repeating-linear-gradient(90deg, #444 0 1px, transparent 1px 3px); }
.row { display: flex; gap: 4px; margin-bottom: 4px; align-items: center; }
.row.spread { justify-content: space-between; }
.row.tight { margin-bottom: 3px; }
.row.apart { gap: 13px; margin-bottom: 1px; }
.grow { flex: 1; }
.small { width: 37px; }
.push { margin-left: auto; }
.tail { margin-right: 9px; }
.side .combo { height: 16px; }
.side .combo svg { height: 14px; }
.group { display: flex; height: 21px; align-items: center; padding: 0 1px; border: 1px solid #d0d0d0; width: max-content; }
.group .tb { width: 17px; }
.group .tb.big { width: 24px; }
.group .big .ic { width: 20px; }
.cols { display: grid; grid-template-columns: 75px 71px; gap: 4px; }
.col { display: grid; grid-template-columns: minmax(0, 1fr); gap: 6px; align-content: start; }
.col .group { margin-top: -4px; }
.col h4 { height: 10px; }
.num { display: flex; align-items: center; height: 15px; }
.num .ic { width: 11px; height: 11px; margin-right: 3px; }
.num input { flex: 1; min-width: 0; height: 15px; padding-left: 2px; background: #fff; border: 1px solid #bbb; }
.spin { flex: none; display: grid; grid-template-rows: 1fr 1fr; width: 10px; height: 15px; border: 1px solid #bbb; border-left: 0; place-items: center; }
.spin::before, .spin::after { content: ""; border: 2px solid transparent; }
.spin::before { border-bottom: 2px solid #222; border-top: 0; }
.spin::after { border-top: 2px solid #222; border-bottom: 0; }

.tabs { display: flex; flex-direction: column; align-items: center; gap: 3px; background: #eee; }
.burger { width: 20px; height: 26px; margin-bottom: -1px; padding: 5px 3px 7px; border-bottom: 1px solid #bbb; }
.burger svg { width: 14px; height: 14px; }
.tab { width: 19px; height: 20px; display: grid; place-items: center; border: 1px solid transparent; }
.tab.active { border-color: #c4c4c4; background: #e2e2e2; }
.tab svg { width: 15px; height: 15px; }
```
